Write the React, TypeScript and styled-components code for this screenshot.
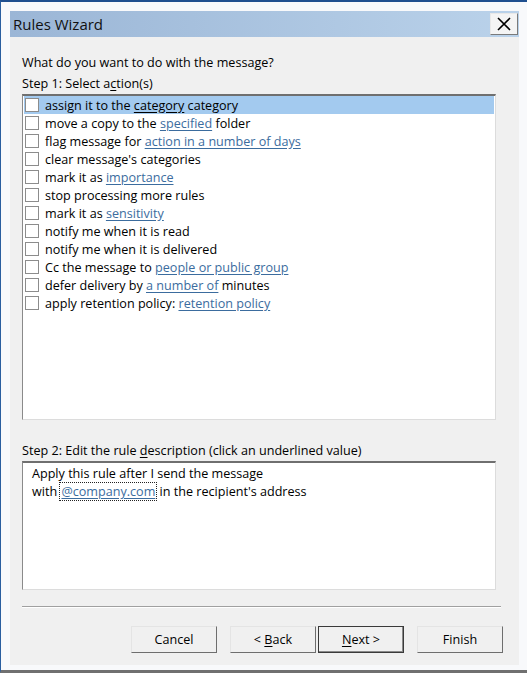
import React from "react";
import styled, { createGlobalStyle } from "styled-components";

const GlobalStyle = createGlobalStyle`
  html, body {
    margin: 0;
    padding: 0;
    background: #ffffff;
  }
  * {
    box-sizing: border-box;
  }
`;

const Window = styled.div`
  width: 527px;
  height: 673px;
  background: #f8f9fb;
  border-top: 2px solid #1f4f8f;
  border-left: 1px solid #2a5ea0;
  border-bottom: 3px solid #707070;
  padding: 9px 8px 5px 9px;
  display: flex;
  flex-direction: column;
  font-family: "Open Sans", "Noto Sans", sans-serif;
  font-size: 12.6px;
  color: #000;
`;

const TitleBar = styled.div`
  height: 26px;
  background: linear-gradient(to right, #9bb6d6, #bad2ea);
  display: flex;
  align-items: center;
  justify-content: space-between;
  padding: 0 1px 0 3px;
  flex-shrink: 0;
`;

const Title = styled.span`
  font-size: 15px;
  color: #111;
`;

const CloseButton = styled.div`
  width: 28px;
  height: 22px;
  background: #f4f4f4;
  border: 1px solid;
  border-color: #e8e8e8 #7a7a7a #7a7a7a #e8e8e8;
  display: flex;
  align-items: center;
  justify-content: center;
`;

const Body = styled.div`
  flex: 1;
  background: #f0f0f0;
  padding: 15px 0 0 12px;
  display: flex;
  flex-direction: column;
`;

const Label = styled.div`
  height: 21px;
  line-height: 21px;
  white-space: nowrap;
`;

const Key = styled.span`
  text-decoration: underline;
  text-underline-offset: 2px;
`;

const ListBox = styled.div<{ height: number }>`
  width: 474px;
  height: ${(p) => p.height}px;
  background: #ffffff;
  border: 1px solid;
  border-color: #6f6f6f #dcdcdc #dcdcdc #8a8a8a;
  border-top-width: 2px;
  padding: 0 1px;
`;

const Row = styled.div<{ selected?: boolean }>`
  height: 18px;
  display: flex;
  align-items: center;
  gap: 6px;
  padding-left: 1px;
  background: ${(p) => (p.selected ? "#a3caef" : "transparent")};
  white-space: nowrap;
`;

const Check = styled.span`
  width: 14px;
  height: 14px;
  background: #ffffff;
  border: 1px solid #8c8c8c;
  flex-shrink: 0;
`;

const Link = styled.span<{ dark?: boolean }>`
  color: ${(p) => (p.dark ? "#000" : "#3b6c9e")};
  text-decoration: underline;
  text-underline-offset: 2px;
`;

const Desc = styled.div`
  padding: 2px 0 0 8px;
  line-height: 18px;
`;

const Focus = styled.span`
  outline: 1px dotted #222;
  outline-offset: 0px;
  padding: 0 1px;
`;

const Separator = styled.div`
  width: 479px;
  height: 2px;
  border-top: 1px solid #a0a0a0;
  border-bottom: 1px solid #ffffff;
  margin-top: 16px;
`;

const ButtonRow = styled.div`
  width: 481px;
  display: flex;
  justify-content: flex-end;
  margin-top: 18px;
`;

const Button = styled.div<{ primary?: boolean; gap?: number }>`
  width: 86px;
  height: 27px;
  margin-left: ${(p) => p.gap ?? 0}px;
  background: #f0f0f0;
  border: 1px solid;
  border-color: ${(p) =>
    p.primary ? "#3a3a3a" : "#e4e4e4 #6e6e6e #6e6e6e #e4e4e4"};
  box-shadow: ${(p) => (p.primary ? "inset -1px -1px 0 #8a8a8a" : "none")};
  display: flex;
  align-items: center;
  justify-content: center;
`;

const actions: React.ReactNode[] = [
  <>assign it to the <Link dark>category</Link> category</>,
  <>move a copy to the <Link>specified</Link> folder</>,
  <>flag message for <Link>action in a number of days</Link></>,
  <>clear message's categories</>,
  <>mark it as <Link>importance</Link></>,
  <>stop processing more rules</>,
  <>mark it as <Link>sensitivity</Link></>,
  <>notify me when it is read</>,
  <>notify me when it is delivered</>,
  <>Cc the message to <Link>people or public group</Link></>,
  <>defer delivery by <Link>a number of</Link> minutes</>,
  <>apply retention policy: <Link>retention policy</Link></>,
];

export default function App() {
  return (
    <>
      <GlobalStyle />
      <Window>
        <TitleBar>
          <Title>Rules Wizard</Title>
          <CloseButton>
            <svg width="16" height="16" viewBox="0 0 16 16">
              <path d="M2 2 L14 14 M14 2 L2 14" stroke="#000" strokeWidth="1.6" />
            </svg>
          </CloseButton>
        </TitleBar>
        <Body>
          <Label>What do you want to do with the message?</Label>
          <Label>
            Step 1: Select a<Key>c</Key>tion(s)
          </Label>
          <ListBox height={326}>
            {actions.map((a, i) => (
              <Row key={i} selected={i === 0}>
                <Check />
                <span>{a}</span>
              </Row>
            ))}
          </ListBox>
          <div style={{ height: 20 }} />
          <Label>
            Step 2: Edit the rule <Key>d</Key>escription (click an underlined value)
          </Label>
          <ListBox height={129}>
            <Desc>
              Apply this rule after I send the message
              <br />
              with <Focus><Link>@company.com</Link></Focus> in the recipient's address
            </Desc>
          </ListBox>
          <Separator />
          <ButtonRow>
            <Button>Cancel</Button>
            <Button gap={13}>
              &lt;&nbsp;<Key>B</Key>ack
            </Button>
            <Button primary gap={2}>
              <Key>N</Key>ext &gt;
            </Button>
            <Button gap={13}>Finish</Button>
          </ButtonRow>
        </Body>
      </Window>
    </>
  );
}
